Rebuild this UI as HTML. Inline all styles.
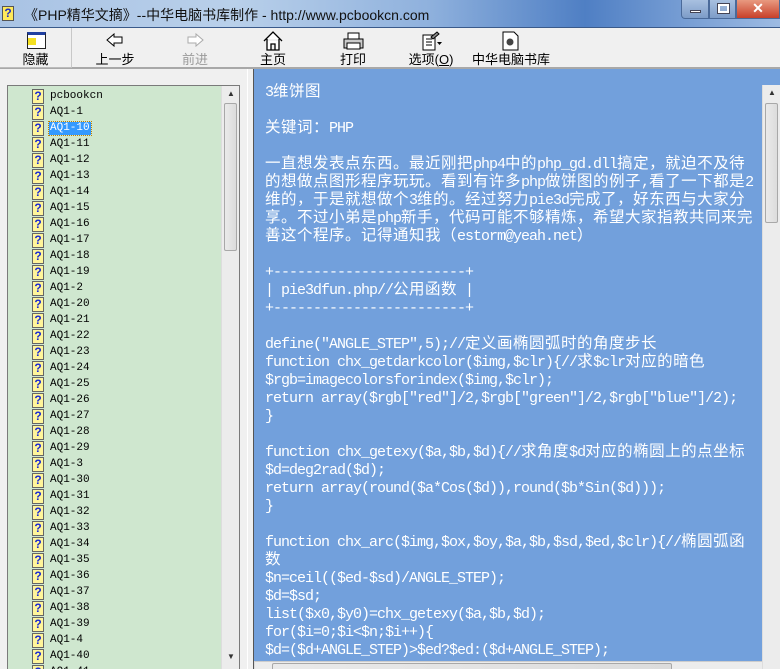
<!DOCTYPE html>
<html><head><meta charset="utf-8">
<style>
*{margin:0;padding:0;box-sizing:border-box}
html,body{width:780px;height:669px;overflow:hidden}
body{background:#f0f0f0;position:relative;font-family:"Liberation Sans","Noto Sans CJK SC",sans-serif}
#title{position:absolute;left:0;top:0;width:780px;height:28px;background:linear-gradient(90deg,#a9c3e4 0%,#b9d0ea 30%,#8fb1dd 55%,#4f7fc4 75%,#9dbbe3 100%);border-bottom:1px solid #3a5a8a}
#title .t{position:absolute;left:24px;top:5px;font-size:14px;color:#111}
#title .ic{position:absolute;left:2px;top:6px;width:12px;height:15px;background:#ffe95a;border:1px solid #555;font:bold 12px "Liberation Sans";color:#2030c0;text-align:center;line-height:13px}
.wb{position:absolute;top:0;height:19px;border:1px solid #4a6a9a;border-top:none}
#tb{position:absolute;left:0;top:28px;width:780px;height:41px;background:#f0f0f0;border-bottom:2px solid #a8a8a8}
.btn{position:absolute;top:0;height:41px;text-align:center;font-size:13px;color:#000}
.btn .lb{position:absolute;left:0;right:0;top:21px}
#left{position:absolute;left:7px;top:85px;width:233px;height:584px;border:1px solid #7a7a7a;border-bottom:none;background:#cfe7cf;overflow:hidden}
#tree{position:absolute;left:0;top:0;width:213px;height:584px;font-family:"Liberation Mono",monospace;font-size:11px;color:#000}
.it{position:absolute;left:24px;height:16px;width:180px}
.it i{position:absolute;left:0;top:1px;width:12px;height:15px;background:#fff59a;border:1px solid #666;font:bold 12px "Liberation Sans";color:#1a2ad0;text-align:center;line-height:13px;font-style:normal}
.it span{position:absolute;left:17px;top:2px;padding:0 1px;line-height:13px}
.sel{background:#3399ff;color:#fff;outline:1px dotted #c08000}
.vs{position:absolute;background:#ececec;border-left:1px solid #ddd}
.thumb{position:absolute;left:2px;right:2px;background:linear-gradient(90deg,#eaeaea,#dcdcdc);border:1px solid #a8a8a8;border-radius:2px}
#right{position:absolute;left:253px;top:69px;width:527px;height:600px;border-left:1px solid #555;background:#72a0dc;overflow:hidden}
#txt{position:absolute;left:11px;top:15px;width:495px;color:#fff;font-family:"Liberation Mono",monospace;font-size:15px;letter-spacing:-1px;line-height:18px}
#txt div{height:18px;white-space:pre;overflow:visible}
#txt b{font-weight:normal;font-size:15.5px;line-height:0;font-family:"Noto Sans CJK SC",sans-serif;letter-spacing:0.5px}
.arr{position:absolute;font-size:8px;color:#333}
</style></head><body>
<div id="title"><div class="ic">?</div><div class="t">《PHP精华文摘》--中华电脑书库制作 - http://www.pcbookcn.com</div>
<div class="wb" style="left:681px;width:28px;background:linear-gradient(#a8c0e0,#7d9cc8);border-radius:0 0 0 4px"><div style="position:absolute;left:8px;top:10px;width:11px;height:3px;background:#fff;border:1px solid #445"></div></div>
<div class="wb" style="left:709px;width:27px;background:linear-gradient(#a8c0e0,#7d9cc8)"><div style="position:absolute;left:8px;top:4px;width:11px;height:9px;border:2px solid #fff;outline:1px solid #445"></div></div>
<div class="wb" style="left:736px;width:44px;background:linear-gradient(#e89a80,#c8402a);color:#fff;font:bold 14px 'Liberation Sans';text-align:center;line-height:17px">✕</div>
</div>
<div id="tb">
<div class="btn" style="left:0;width:72px;border-right:1px solid #c8c8c8;border-bottom:1px solid #bbb;height:40px"><div style="position:absolute;left:27px;top:4px;width:19px;height:17px;border:1px solid #222;background:#fff;border-top:3px solid #2040a0"></div><div style="position:absolute;left:28px;top:10px;width:8px;height:7px;background:#f4e020"></div><div class="lb">隐藏</div></div>
<div class="btn" style="left:82px;width:66px"><svg style="position:absolute;left:24px;top:5px" width="18" height="14"><path d="M1 7 L8 1 V4 H16 V10 H8 V13 Z" fill="#fff" stroke="#000"/></svg><div class="lb">上一步</div></div>
<div class="btn" style="left:162px;width:66px;color:#9a9a9a"><svg style="position:absolute;left:24px;top:5px" width="18" height="14"><path d="M17 7 L10 1 V4 H2 V10 H10 V13 Z" fill="#fff" stroke="#aaa"/></svg><div class="lb">前进</div></div>
<div class="btn" style="left:240px;width:66px"><svg style="position:absolute;left:22px;top:3px" width="22" height="20"><path d="M2 10 L11 1 L20 10 M5 8 V19 H17 V8 M9 19 V13 H13 V19" fill="#fff" stroke="#000" stroke-width="1.3"/></svg><div class="lb">主页</div></div>
<div class="btn" style="left:320px;width:66px"><svg style="position:absolute;left:22px;top:4px" width="22" height="19"><rect x="6" y="1" width="11" height="6" fill="#fff" stroke="#000"/><rect x="2" y="7" width="19" height="9" fill="#ccc" stroke="#000"/><rect x="5" y="11" width="13" height="6" fill="#fff" stroke="#000"/></svg><div class="lb">打印</div></div>
<div class="btn" style="left:398px;width:66px"><svg style="position:absolute;left:23px;top:3px" width="22" height="20"><rect x="2" y="4" width="12" height="15" fill="#fff" stroke="#000"/><path d="M5 8h6M5 11h6M5 14h6" stroke="#000"/><path d="M10 6 L16 1 L18 3 L12 8Z" fill="#888" stroke="#000"/><path d="M16 11 h5 l-2.5 3z" fill="#000"/></svg><div class="lb">选项(<u>O</u>)</div></div>
<div class="btn" style="left:470px;width:82px"><svg style="position:absolute;left:32px;top:3px" width="18" height="20"><path d="M1 1 H12 L16 5 V19 H1 Z" fill="#fff" stroke="#000"/><circle cx="8" cy="11" r="3.5" fill="#444"/></svg><div class="lb">中华电脑书库</div></div>
</div>
<div style="position:absolute;left:247px;top:69px;width:1px;height:600px;background:#fff"></div>
<div id="left"><div id="tree">
<div class="it" style="top:2px"><i>?</i><span>pcbookcn</span></div>
<div class="it" style="top:18px"><i>?</i><span>AQ1-1</span></div>
<div class="it" style="top:34px"><i>?</i><span class="sel">AQ1-10</span></div>
<div class="it" style="top:50px"><i>?</i><span>AQ1-11</span></div>
<div class="it" style="top:66px"><i>?</i><span>AQ1-12</span></div>
<div class="it" style="top:82px"><i>?</i><span>AQ1-13</span></div>
<div class="it" style="top:98px"><i>?</i><span>AQ1-14</span></div>
<div class="it" style="top:114px"><i>?</i><span>AQ1-15</span></div>
<div class="it" style="top:130px"><i>?</i><span>AQ1-16</span></div>
<div class="it" style="top:146px"><i>?</i><span>AQ1-17</span></div>
<div class="it" style="top:162px"><i>?</i><span>AQ1-18</span></div>
<div class="it" style="top:178px"><i>?</i><span>AQ1-19</span></div>
<div class="it" style="top:194px"><i>?</i><span>AQ1-2</span></div>
<div class="it" style="top:210px"><i>?</i><span>AQ1-20</span></div>
<div class="it" style="top:226px"><i>?</i><span>AQ1-21</span></div>
<div class="it" style="top:242px"><i>?</i><span>AQ1-22</span></div>
<div class="it" style="top:258px"><i>?</i><span>AQ1-23</span></div>
<div class="it" style="top:274px"><i>?</i><span>AQ1-24</span></div>
<div class="it" style="top:290px"><i>?</i><span>AQ1-25</span></div>
<div class="it" style="top:306px"><i>?</i><span>AQ1-26</span></div>
<div class="it" style="top:322px"><i>?</i><span>AQ1-27</span></div>
<div class="it" style="top:338px"><i>?</i><span>AQ1-28</span></div>
<div class="it" style="top:354px"><i>?</i><span>AQ1-29</span></div>
<div class="it" style="top:370px"><i>?</i><span>AQ1-3</span></div>
<div class="it" style="top:386px"><i>?</i><span>AQ1-30</span></div>
<div class="it" style="top:402px"><i>?</i><span>AQ1-31</span></div>
<div class="it" style="top:418px"><i>?</i><span>AQ1-32</span></div>
<div class="it" style="top:434px"><i>?</i><span>AQ1-33</span></div>
<div class="it" style="top:450px"><i>?</i><span>AQ1-34</span></div>
<div class="it" style="top:466px"><i>?</i><span>AQ1-35</span></div>
<div class="it" style="top:482px"><i>?</i><span>AQ1-36</span></div>
<div class="it" style="top:498px"><i>?</i><span>AQ1-37</span></div>
<div class="it" style="top:514px"><i>?</i><span>AQ1-38</span></div>
<div class="it" style="top:530px"><i>?</i><span>AQ1-39</span></div>
<div class="it" style="top:546px"><i>?</i><span>AQ1-4</span></div>
<div class="it" style="top:562px"><i>?</i><span>AQ1-40</span></div>
<div class="it" style="top:578px"><i>?</i><span>AQ1-41</span></div>
</div>
<div class="vs" style="left:213px;top:0;width:18px;height:584px"><div class="arr" style="left:5px;top:3px">▲</div><div class="thumb" style="top:17px;height:148px"></div><div class="arr" style="left:5px;top:566px">▼</div></div>
</div>
<div id="right">
<div id="txt">
<div>3<b>维饼图</b></div>
<div></div>
<div><b>关键词：</b>PHP</div>
<div></div>
<div><b>一直想发表点东西。最近刚把</b>php4<b>中的</b>php_gd.dll<b>搞定，就迫不及待</b></div>
<div><b>的想做点图形程序玩玩。看到有许多</b>php<b>做饼图的例子</b>,<b>看了一下都是</b>2</div>
<div><b>维的，于是就想做个</b>3<b>维的。经过努力</b>pie3d<b>完成了，好东西与大家分</b></div>
<div><b>享。不过小弟是</b>php<b>新手，代码可能不够精炼，希望大家指教共同来完</b></div>
<div><b>善这个程序。记得通知我（</b>estorm@yeah.net<b>）</b></div>
<div></div>
<div>+------------------------+</div>
<div>| pie3dfun.php//<b>公用函数</b> |</div>
<div>+------------------------+</div>
<div></div>
<div>define("ANGLE_STEP",5);//<b>定义画椭圆弧时的角度步长</b></div>
<div>function chx_getdarkcolor($img,$clr){//<b>求</b>$clr<b>对应的暗色</b></div>
<div>$rgb=imagecolorsforindex($img,$clr);</div>
<div>return array($rgb["red"]/2,$rgb["green"]/2,$rgb["blue"]/2);</div>
<div>}</div>
<div></div>
<div>function chx_getexy($a,$b,$d){//<b>求角度</b>$d<b>对应的椭圆上的点坐标</b></div>
<div>$d=deg2rad($d);</div>
<div>return array(round($a*Cos($d)),round($b*Sin($d)));</div>
<div>}</div>
<div></div>
<div>function chx_arc($img,$ox,$oy,$a,$b,$sd,$ed,$clr){//<b>椭圆弧函</b></div>
<div><b>数</b></div>
<div>$n=ceil(($ed-$sd)/ANGLE_STEP);</div>
<div>$d=$sd;</div>
<div>list($x0,$y0)=chx_getexy($a,$b,$d);</div>
<div>for($i=0;$i&lt;$n;$i++){</div>
<div>$d=($d+ANGLE_STEP)&gt;$ed?$ed:($d+ANGLE_STEP);</div>
</div>
<div class="vs" style="left:508px;top:16px;width:18px;height:584px"><div class="arr" style="left:5px;top:3px">▲</div><div class="thumb" style="top:18px;height:120px"></div></div>
<div class="vs" style="left:0;top:592px;width:508px;height:8px;border-top:1px solid #ccc"><div class="thumb" style="left:17px;width:400px;top:1px;height:8px"></div></div>
</div>
</body></html>
